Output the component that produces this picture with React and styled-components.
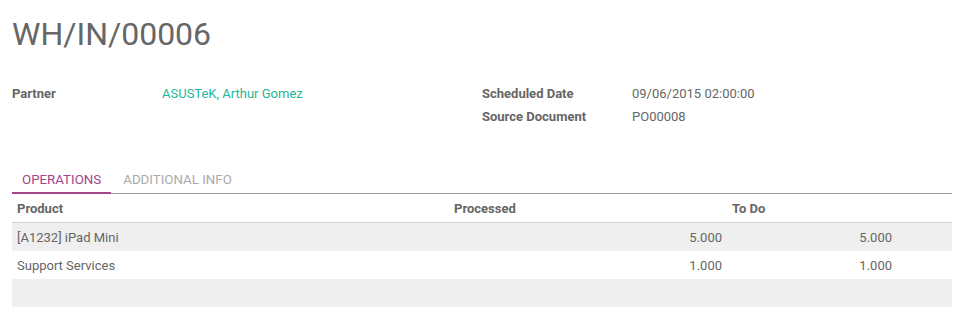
import React from 'react';
import styled, { createGlobalStyle } from 'styled-components';

const GlobalStyle = createGlobalStyle`
  body {
    margin: 0;
    background: #fff;
    font-family: Roboto, "Noto Sans", sans-serif;
    font-size: 13px;
    color: #4c4c4c;
  }
`;

const Sheet = styled.div`
  padding: 12px 11px 0 12px;
`;

const Title = styled.h1`
  margin: 0;
  font-size: 32px;
  font-weight: 400;
  line-height: 44px;
  color: #666;
`;

const Groups = styled.div`
  display: grid;
  grid-template-columns: 470px 1fr;
  margin-top: 26px;
`;

const Group = styled.div`
  display: flex;
  flex-direction: column;
`;

const Field = styled.div`
  display: grid;
  grid-template-columns: 150px 1fr;
  line-height: 23px;
`;

const Label = styled.span`
  font-weight: 700;
  color: #666;
`;

const Value = styled.span`
  color: ${(p) => (p.link ? '#21b799' : '#666')};
`;

const Tabs = styled.div`
  display: flex;
  margin-top: 40px;
  border-bottom: 1px solid #9a9a9a;
`;

const Tab = styled.div`
  padding: 0 10px;
  margin-right: ${(p) => (p.active ? '2px' : '0')};
  font-size: 13.3px;
  line-height: 24px;
  text-transform: uppercase;
  color: ${(p) => (p.active ? '#a24689' : '#aaa')};
  border-bottom: 2px solid ${(p) => (p.active ? '#a24689' : 'transparent')};
  margin-bottom: -1px;
`;

const Table = styled.table`
  width: 100%;
  border-collapse: collapse;
  color: #666;
`;

const Th = styled.th`
  text-align: left;
  font-weight: 700;
  height: 28px;
  padding: 0 5px;
  border-bottom: 1px solid #d0d0d0;
`;

const Row = styled.tr`
  background: ${(p) => (p.striped ? '#eeefee' : '#fff')};
`;

const Td = styled.td`
  height: 28px;
  padding: 0 5px;
  text-align: ${(p) => (p.num ? 'right' : 'left')};
`;

const lines = [
  { product: '[A1232] iPad Mini', processed: '5.000', todo: '5.000' },
  { product: 'Support Services', processed: '1.000', todo: '1.000' },
];

export default function App() {
  return (
    <>
      <GlobalStyle />
      <Sheet>
        <Title>WH/IN/00006</Title>
        <Groups>
          <Group>
            <Field>
              <Label>Partner</Label>
              <Value link>ASUSTeK, Arthur Gomez</Value>
            </Field>
          </Group>
          <Group>
            <Field>
              <Label>Scheduled Date</Label>
              <Value>09/06/2015 02:00:00</Value>
            </Field>
            <Field>
              <Label>Source Document</Label>
              <Value>PO00008</Value>
            </Field>
          </Group>
        </Groups>
        <Tabs>
          <Tab active>Operations</Tab>
          <Tab>Additional Info</Tab>
        </Tabs>
        <Table>
          <colgroup>
            <col style={{ width: 437 }} />
            <col style={{ width: 278 }} />
            <col style={{ width: 170 }} />
            <col />
          </colgroup>
          <thead>
            <tr>
              <Th>Product</Th>
              <Th>Processed</Th>
              <Th>To Do</Th>
              <Th />
            </tr>
          </thead>
          <tbody>
            {lines.map((l, i) => (
              <Row key={l.product} striped={i % 2 === 0}>
                <Td>{l.product}</Td>
                <Td num>{l.processed}</Td>
                <Td num>{l.todo}</Td>
                <Td />
              </Row>
            ))}
            <Row striped>
              <Td />
              <Td />
              <Td />
              <Td />
            </Row>
          </tbody>
        </Table>
      </Sheet>
    </>
  );
}
